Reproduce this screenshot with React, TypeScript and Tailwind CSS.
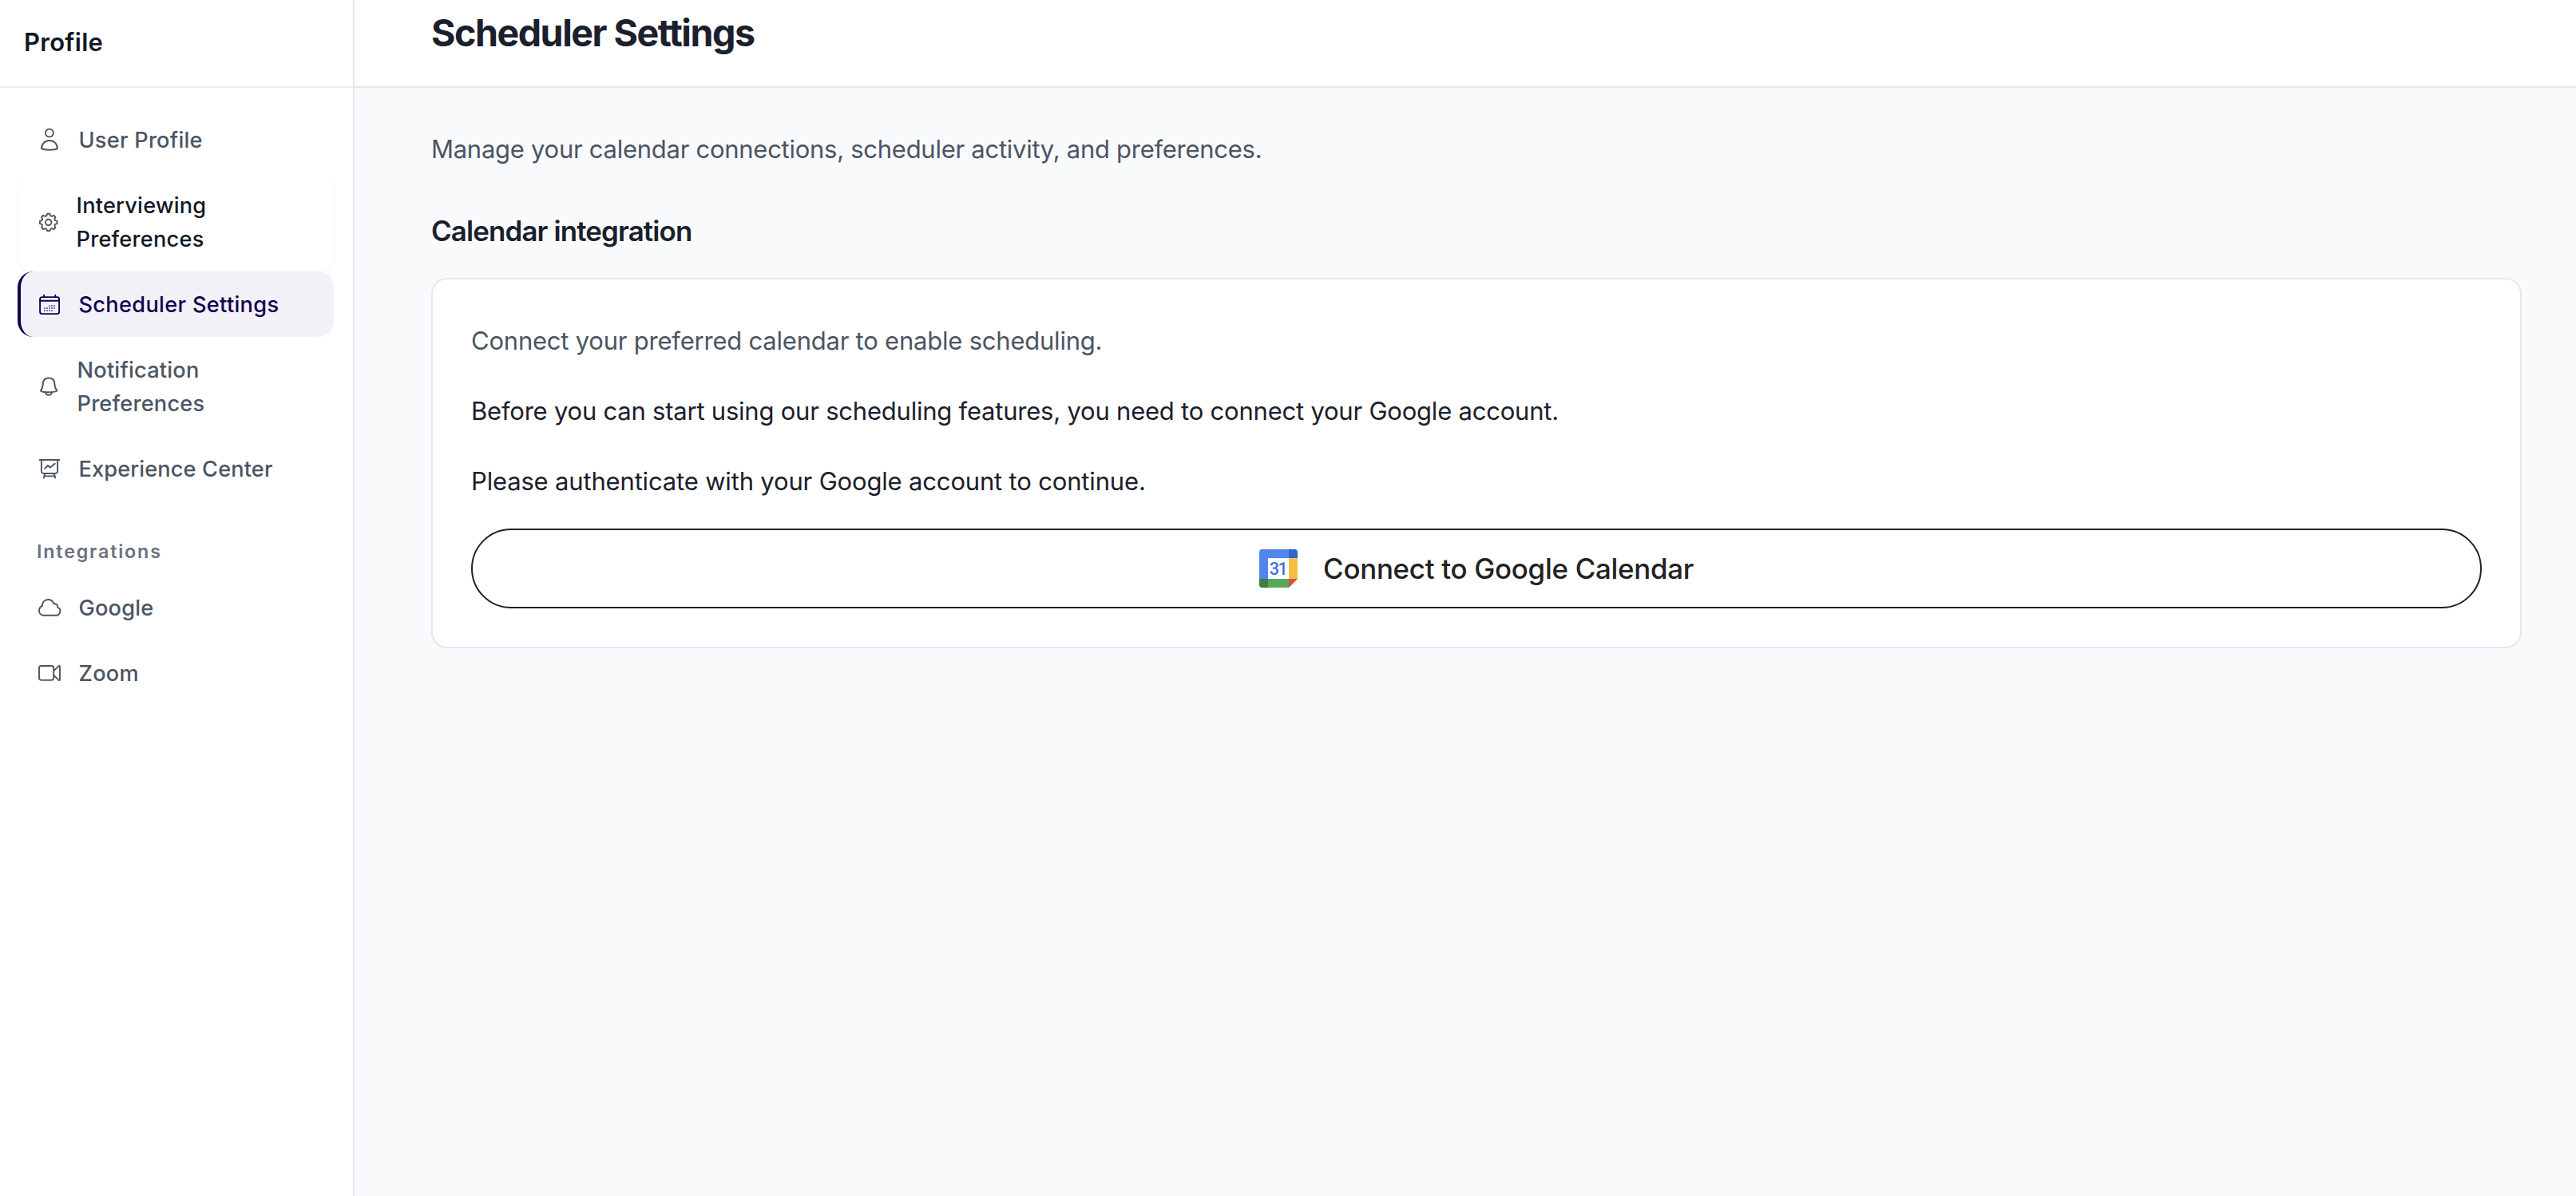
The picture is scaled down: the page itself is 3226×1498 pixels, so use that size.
import React from "react";

type SvgProps = { size: string; box?: number; children: React.ReactNode };

function Icon({ size, box = 32, children }: SvgProps) {
  return (
    <svg
      viewBox={`0 0 ${box} ${box}`}
      fill="none"
      stroke="currentColor"
      strokeWidth="1.9"
      strokeLinecap="round"
      strokeLinejoin="round"
      className={`${size} shrink-0`}
    >
      {children}
    </svg>
  );
}

const UserIcon = () => (
  <Icon size="size-8">
    <circle cx="15.9" cy="7.5" r="4.9" />
    <path d="M6 27.2C6 21.5 10.2 17 15.95 17S25.9 21.5 25.9 27.2C22 29.2 10 29.2 6 27.2Z" />
  </Icon>
);

// Eight-toothed outline around the centre of a 29px box.
const gearOutline = Array.from({ length: 8 }, (_, i) => {
  const at = (r: number, deg: number) => {
    const a = ((i * 45 + deg) * Math.PI) / 180;
    return `${(14.7 + r * Math.sin(a)).toFixed(2)} ${(14.5 - r * Math.cos(a)).toFixed(2)}`;
  };
  return `${i ? "L" : "M"}${at(10.9, -8)}L${at(10.9, 8)}L${at(9.4, 13)}Q${at(7.6, 22.5)} ${at(9.4, 32)}`;
}).join("");

const GearIcon = () => (
  <Icon size="size-[29px]" box={29}>
    <circle cx="14.7" cy="14.5" r="3.7" />
    <path d={`${gearOutline}Z`} />
  </Icon>
);

const CalendarIcon = () => (
  <Icon size="size-8">
    <rect x="4.1" y="7.1" width="24" height="21" rx="2.6" />
    <path d="M4.1 11.8h24M9 4.6v2.5M23.3 4.6v2.5" />
    <path
      strokeWidth="2"
      strokeLinecap="butt"
      strokeDasharray="2 1"
      opacity=".5"
      d="M15 18h8M9 21h14M9 24h11"
    />
  </Icon>
);

const BellIcon = () => (
  <Icon size="size-[30px]" box={30}>
    <path d="M15 4.5C10.5 4.5 8.1 7.2 7.9 11 7.7 15.5 7 17.7 4.9 20.4 5.5 21.2 10 22.3 15 22.3S24.5 21.2 25.4 20.4C23.2 17.7 22.4 15.5 22.2 11 22 7.2 19.5 4.5 15 4.5Z" />
    <path d="M11.3 22.4C11.3 26.9 18.9 26.9 18.9 22.4" />
  </Icon>
);

const BoardIcon = () => (
  <Icon size="size-8">
    <path d="M3.6 5h24.8M5.9 5v14.2a2.8 2.8 0 0 0 2.8 2.8h14.6a2.8 2.8 0 0 0 2.8-2.8V5M10.4 22.4 8.8 27.6M21.7 22.4l1.6 5.2M9.7 25.4h12.6" />
    <path d="M10.3 15.7l3.6-3.7 2.9 2.4 5.9-4.7" />
  </Icon>
);

const CloudIcon = () => (
  <Icon size="size-8">
    <path d="M8.5 25.7h15.3a5.2 5.2 0 0 0 2.3-10C26.6 12.8 24.5 10.8 21.3 11.3 20.3 8.1 17.5 6 14.2 6 9.9 6 6.8 9.3 7 13.7 4.6 14.8 3 17 3 19.8c0 3.3 2.3 5.9 5.5 5.9Z" />
  </Icon>
);

const VideoIcon = () => (
  <Icon size="size-8">
    <rect x="3" y="7" width="18.2" height="17.9" rx="2.8" />
    <path d="M21.2 13.4 27.3 7.3q1.7-1.2 1.7.8v15.8q0 2-1.7.8L21.2 18.6" />
  </Icon>
);

function CalendarLogo() {
  return (
    <svg viewBox="0 0 48 48" className="size-12 shrink-0">
      <path fill="#5286ee" d="M3.5 0H37v11.3H11V37H0V3.5A3.5 3.5 0 0 1 3.5 0Z" />
      <path fill="#3065cb" d="M37 0h7.5A3.5 3.5 0 0 1 48 3.5v7.8H37Z" />
      <path fill="#f2c043" d="M37 11.3h11V37H37Z" />
      <path fill="#59a75c" d="M11 37h26v11H11Z" />
      <path fill="#3c7f3f" d="M0 37h11v11H3.5A3.5 3.5 0 0 1 0 44.5Z" />
      <path fill="#da4f3e" d="M37 37h11L37 48Z" />
      <path fill="#fff" d="M11 11.3h26V37H11Z" />
      <text x="23.5" y="32" textAnchor="middle" fontFamily="Roboto, sans-serif" fontSize="21.5" fontWeight="500" letterSpacing="-1.5" fill="#3d72e0">
        31
      </text>
    </svg>
  );
}

type ItemProps = { icon: React.ReactNode; tracking: string; tone?: string; children: React.ReactNode };

function Item({ icon, tracking, tone = "border-transparent text-[#4b5563]", children }: ItemProps) {
  return (
    <a className={`flex items-center gap-5 rounded-[20px] border-l-4 py-5 pl-5 ${tone}`}>
      {icon}
      <span className={`mt-px -mb-px ml-[0.5px] whitespace-nowrap ${tracking}`}>{children}</span>
    </a>
  );
}

function Sidebar() {
  return (
    <aside className="flex w-[444px] shrink-0 flex-col border-r-2 border-[#e5e7eb] bg-white font-medium">
      <div className="flex h-[110px] items-center border-b-2 border-[#ebecf2] pb-px pl-[30px]">
        <h2 className="text-[31px] font-semibold tracking-[0.26px] text-[#111827]">Profile</h2>
      </div>
      <nav className="flex flex-col pt-6 pr-6 pl-[22px] text-[27.2px] leading-[42px]">
        <Item icon={<UserIcon />} tracking="tracking-[0.24px]">User Profile</Item>
        <Item
          icon={<GearIcon />}
          tracking="tracking-[0.22px] text-[#111827]"
          tone="border-transparent bg-white text-[#4b5563] shadow-[0_2px_4px_rgba(0,0,0,0.05)]"
        >
          Interviewing
          <br />
          Preferences
        </Item>
        <Item icon={<CalendarIcon />} tracking="tracking-[0.31px]" tone="border-[#150050] bg-[#f2f1f7] text-[#150050]">
          Scheduler Settings
        </Item>
        <Item icon={<BellIcon />} tracking="tracking-[0.2px]">
          Notification
          <br />
          Preferences
        </Item>
        <Item icon={<BoardIcon />} tracking="tracking-[0.12px]">Experience Center</Item>
        <h3 className="mt-[45px] mb-[11px] pl-6 text-[23.3px] leading-9 font-semibold tracking-[1.81px] text-[#6b7280]">
          Integrations
        </h3>
        <Item icon={<CloudIcon />} tracking="tracking-[0.16px]">Google</Item>
        <Item icon={<VideoIcon />} tracking="tracking-[0.26px]">Zoom</Item>
      </nav>
    </aside>
  );
}

export default function App() {
  return (
    <div className="flex h-[1498px] w-full overflow-hidden bg-[#f9fafc] font-[Inter,sans-serif] text-[#1a202c]">
      <Sidebar />
      <main className="min-w-0 flex-1">
        <header className="h-[110px] border-b-2 border-[#e5e7eb] bg-white pt-[11px] pl-24">
          <h1 className="text-[46.6px] leading-[60px] font-bold tracking-[-1.49px]">Scheduler Settings</h1>
        </header>
        <div className="pt-[53px] pr-[68px] pl-24 text-[31px] leading-[48px]">
          <p className="tracking-[-0.27px] text-[#4b5563]">
            Manage your calendar connections, scheduler activity, and preferences.
          </p>
          <h2 className="mt-[51px] text-[34.9px] leading-[54px] font-semibold tracking-[-0.87px]">Calendar integration</h2>
          <section className="mt-8 rounded-[20px] border-2 border-[#e5e7eb] bg-white px-12 pt-[53px] pb-12">
            <p className="tracking-[-0.22px] text-[#4b5563]">Connect your preferred calendar to enable scheduling.</p>
            <p className="mt-10 tracking-[-0.22px]">
              Before you can start using our scheduling features, you need to connect your Google account.
            </p>
            <p className="mt-10 tracking-[-0.17px]">Please authenticate with your Google account to continue.</p>
            <button className="mt-[35px] flex h-[100px] w-full items-center justify-center gap-8 rounded-full border-2 border-[#222] bg-white text-[34.9px] font-medium tracking-[-0.29px] text-[#222]">
              <CalendarLogo />
              <span>Connect to Google Calendar</span>
            </button>
          </section>
        </div>
      </main>
    </div>
  );
}
